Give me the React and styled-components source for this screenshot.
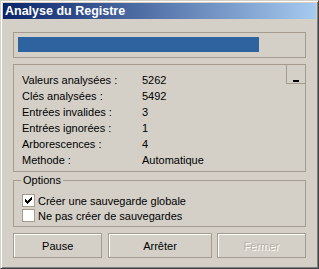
import React from "react";
import styled, { createGlobalStyle } from "styled-components";

const Global = createGlobalStyle`
  html, body { margin: 0; padding: 0; background: #D4D0C8; }
  * { box-sizing: border-box; }
`;

const FONT = `"Liberation Sans", Arial, sans-serif`;
const LINE = "#A69C8E";

const Window = styled.div`
  width: 319px;
  height: 269px;
  background: #D4D0C8;
  border: 1px solid;
  border-color: #D4D0C8 #404040 #404040 #D4D0C8;
  box-shadow: inset 1px 1px #ffffff, inset -1px -1px #808080;
  padding: 2px;
  display: flex;
  flex-direction: column;
  font-family: ${FONT};
  font-size: 11px;
  color: #000;
`;

const TitleBar = styled.div`
  height: 16px;
  background: linear-gradient(to right, #0A246A, #A6CAF0);
  color: #fff;
  font-weight: bold;
  font-size: 12.5px;
  line-height: 16px;
  padding-left: 2px;
  white-space: nowrap;
`;

const Body = styled.div`
  padding: 0 10px;
  display: flex;
  flex-direction: column;
`;

const Frame = styled.div`
  border: 1px solid ${LINE};
`;

const ProgressFrame = styled(Frame)`
  margin-top: 13px;
  height: 26px;
  padding: 4px;
`;

const ProgressBar = styled.div`
  height: 15px;
  background: #2F63A0;
`;

const StatsFrame = styled(Frame)`
  position: relative;
  margin-top: 6px;
  height: 108px;
  padding: 7px 0 0 8px;
`;

const StatsGrid = styled.div`
  display: grid;
  grid-template-columns: 120px 1fr;
  line-height: 16px;
`;

const CollapseButton = styled.div`
  position: absolute;
  top: -1px;
  right: -1px;
  width: 20px;
  height: 20px;
  border: 1px solid ${LINE};
  &::after {
    content: "";
    position: absolute;
    left: 6px;
    top: 15px;
    width: 6px;
    height: 2px;
    background: #000;
  }
`;

const Group = styled.fieldset`
  margin: 2px 0 0 0;
  padding: 0 0 0 8px;
  border: 1px solid ${LINE};
  height: 53px;
  min-width: 0;
`;

const Legend = styled.legend`
  padding: 0 2px;
  margin-left: -1px;
  line-height: 13px;
`;

const CheckRow = styled.label`
  display: flex;
  align-items: center;
  height: 15px;
  gap: 2px;
  margin-top: ${(p) => (p.$first ? "6px" : "0")};
`;

const Box = styled.span`
  width: 13px;
  height: 13px;
  border: 1px solid ${LINE};
  background: #ffffff;
  display: inline-flex;
  align-items: center;
  justify-content: center;
  margin-right: 1px;
`;

const Buttons = styled.div`
  display: flex;
  margin-top: 6px;
  gap: 5px;
`;

const Button = styled.div`
  width: ${(p) => p.$w}px;
  height: 25px;
  border: 1px solid ${LINE};
  box-shadow: inset 1px 1px #ffffff;
  display: flex;
  align-items: center;
  justify-content: center;
  color: ${(p) => (p.$disabled ? "#B4B0A6" : "#000")};
  text-shadow: ${(p) => (p.$disabled ? "1px 1px #ffffff" : "none")};
  margin-left: ${(p) => p.$ml || 0}px;
`;

const stats = [
  ["Valeurs analysées :", "5262"],
  ["Clés analysées :", "5492"],
  ["Entrées invalides :", "3"],
  ["Entrées ignorées :", "1"],
  ["Arborescences :", "4"],
  ["Methode :", "Automatique"],
];

function Check({ checked }) {
  return (
    <Box>
      {checked && (
        <svg width="7" height="7" viewBox="0 0 7 7" shapeRendering="crispEdges">
          <path d="M6 0h1v3h-1v1h-1v1h-1v1h-1v1h-1v-1h-1v-1h-1v-3h1v1h1v1h1v-1h1v-1h1z" fill="#000" />
        </svg>
      )}
    </Box>
  );
}

export default function App() {
  const progress = 241 / 283;
  return (
    <>
      <Global />
      <Window>
        <TitleBar>Analyse du Registre</TitleBar>
        <Body>
          <ProgressFrame>
            <ProgressBar style={{ width: `${progress * 100}%` }} />
          </ProgressFrame>
          <StatsFrame>
            <CollapseButton />
            <StatsGrid>
              {stats.map(([k, v]) => (
                <React.Fragment key={k}>
                  <span>{k}</span>
                  <span>{v}</span>
                </React.Fragment>
              ))}
            </StatsGrid>
          </StatsFrame>
          <Group>
            <Legend>Options</Legend>
            <CheckRow $first>
              <Check checked />
              Créer une sauvegarde globale
            </CheckRow>
            <CheckRow>
              <Check />
              Ne pas créer de sauvegardes
            </CheckRow>
          </Group>
          <Buttons>
            <Button $w={90}>Pause</Button>
            <Button $w={104} $ml={1}>Arrêter</Button>
            <Button $w={90} $disabled>Fermer</Button>
          </Buttons>
        </Body>
      </Window>
    </>
  );
}
